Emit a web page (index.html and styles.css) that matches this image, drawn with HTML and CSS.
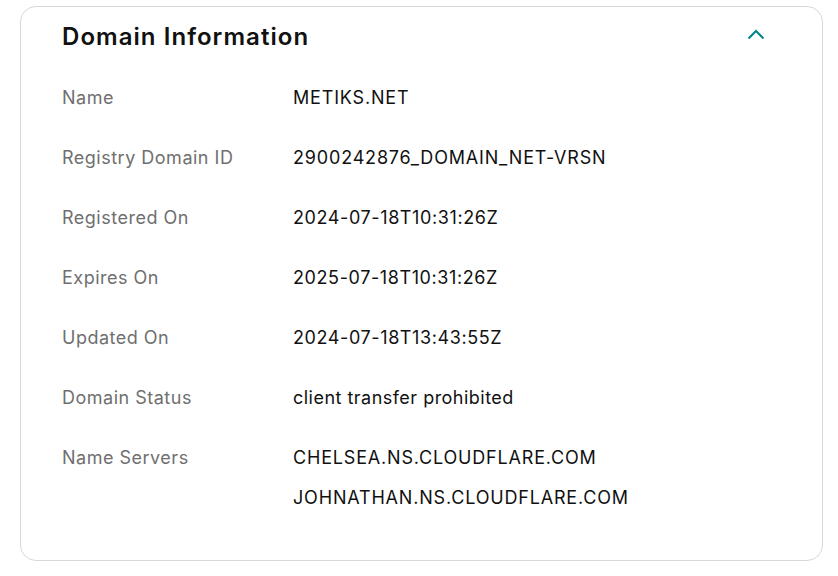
FILE: index.html
```html
<!DOCTYPE html>
<html>
<head>
<meta charset="utf-8">
<link rel="stylesheet" href="styles.css">
</head>
<body>
<section class="card">
  <header class="head">
    <h2 class="title">Domain Information</h2>
    <svg class="chev" width="18" height="11" viewBox="0 0 18 11"><path d="M1.5 9.5 L9 2 L16.5 9.5" fill="none" stroke="#00838a" stroke-width="2"/></svg>
  </header>
  <dl class="rows">
    <div class="row"><dt>Name</dt><dd class="caps">METIKS.NET</dd></div>
    <div class="row"><dt>Registry Domain ID</dt><dd class="caps">2900242876_DOMAIN_NET-VRSN</dd></div>
    <div class="row"><dt>Registered On</dt><dd>2024-07-18T10:31:26Z</dd></div>
    <div class="row"><dt>Expires On</dt><dd>2025-07-18T10:31:26Z</dd></div>
    <div class="row"><dt>Updated On</dt><dd>2024-07-18T13:43:55Z</dd></div>
    <div class="row"><dt>Domain Status</dt><dd class="lower">client transfer prohibited</dd></div>
    <div class="row"><dt>Name Servers</dt><dd class="caps"><div class="line">CHELSEA.NS.CLOUDFLARE.COM</div><div class="line">JOHNATHAN.NS.CLOUDFLARE.COM</div></dd></div>
  </dl>
</section>
</body>
</html>
```
FILE: styles.css
```css
html, body { margin: 0; padding: 0; background: #fff; }
body { font-family: "Inter", "Noto Sans", sans-serif; color: #111; }
.card {
  box-sizing: border-box;
  margin: 6px 0 0 20px;
  width: 803px;
  height: 555px;
  border: 1px solid #d4d8dd;
  border-radius: 16px;
  padding: 0 0 0 41px;
}
.head {
  display: flex;
  align-items: center;
  justify-content: space-between;
  height: 58px;
  padding-right: 57px;
}
.title { margin: 0; font-size: 24px; font-weight: 600; letter-spacing: 1.05px; color: #111; }
.chev { display: block; margin-top: -3px; }
.rows { margin: 0; padding: 0; }
.row { display: flex; align-items: flex-start; padding-top: 18px; padding-bottom: 12px; font-size: 18px; line-height: 30px; }
.row dt { width: 231px; flex: none; color: #6f6f6f; letter-spacing: 0.5px; }
.row dd { margin: 0; color: #111; letter-spacing: 0.6px; }
.row dd.caps { letter-spacing: 0.82px; }
.row dd.lower { letter-spacing: 0.48px; }
.line + .line { margin-top: 10px; }
```
